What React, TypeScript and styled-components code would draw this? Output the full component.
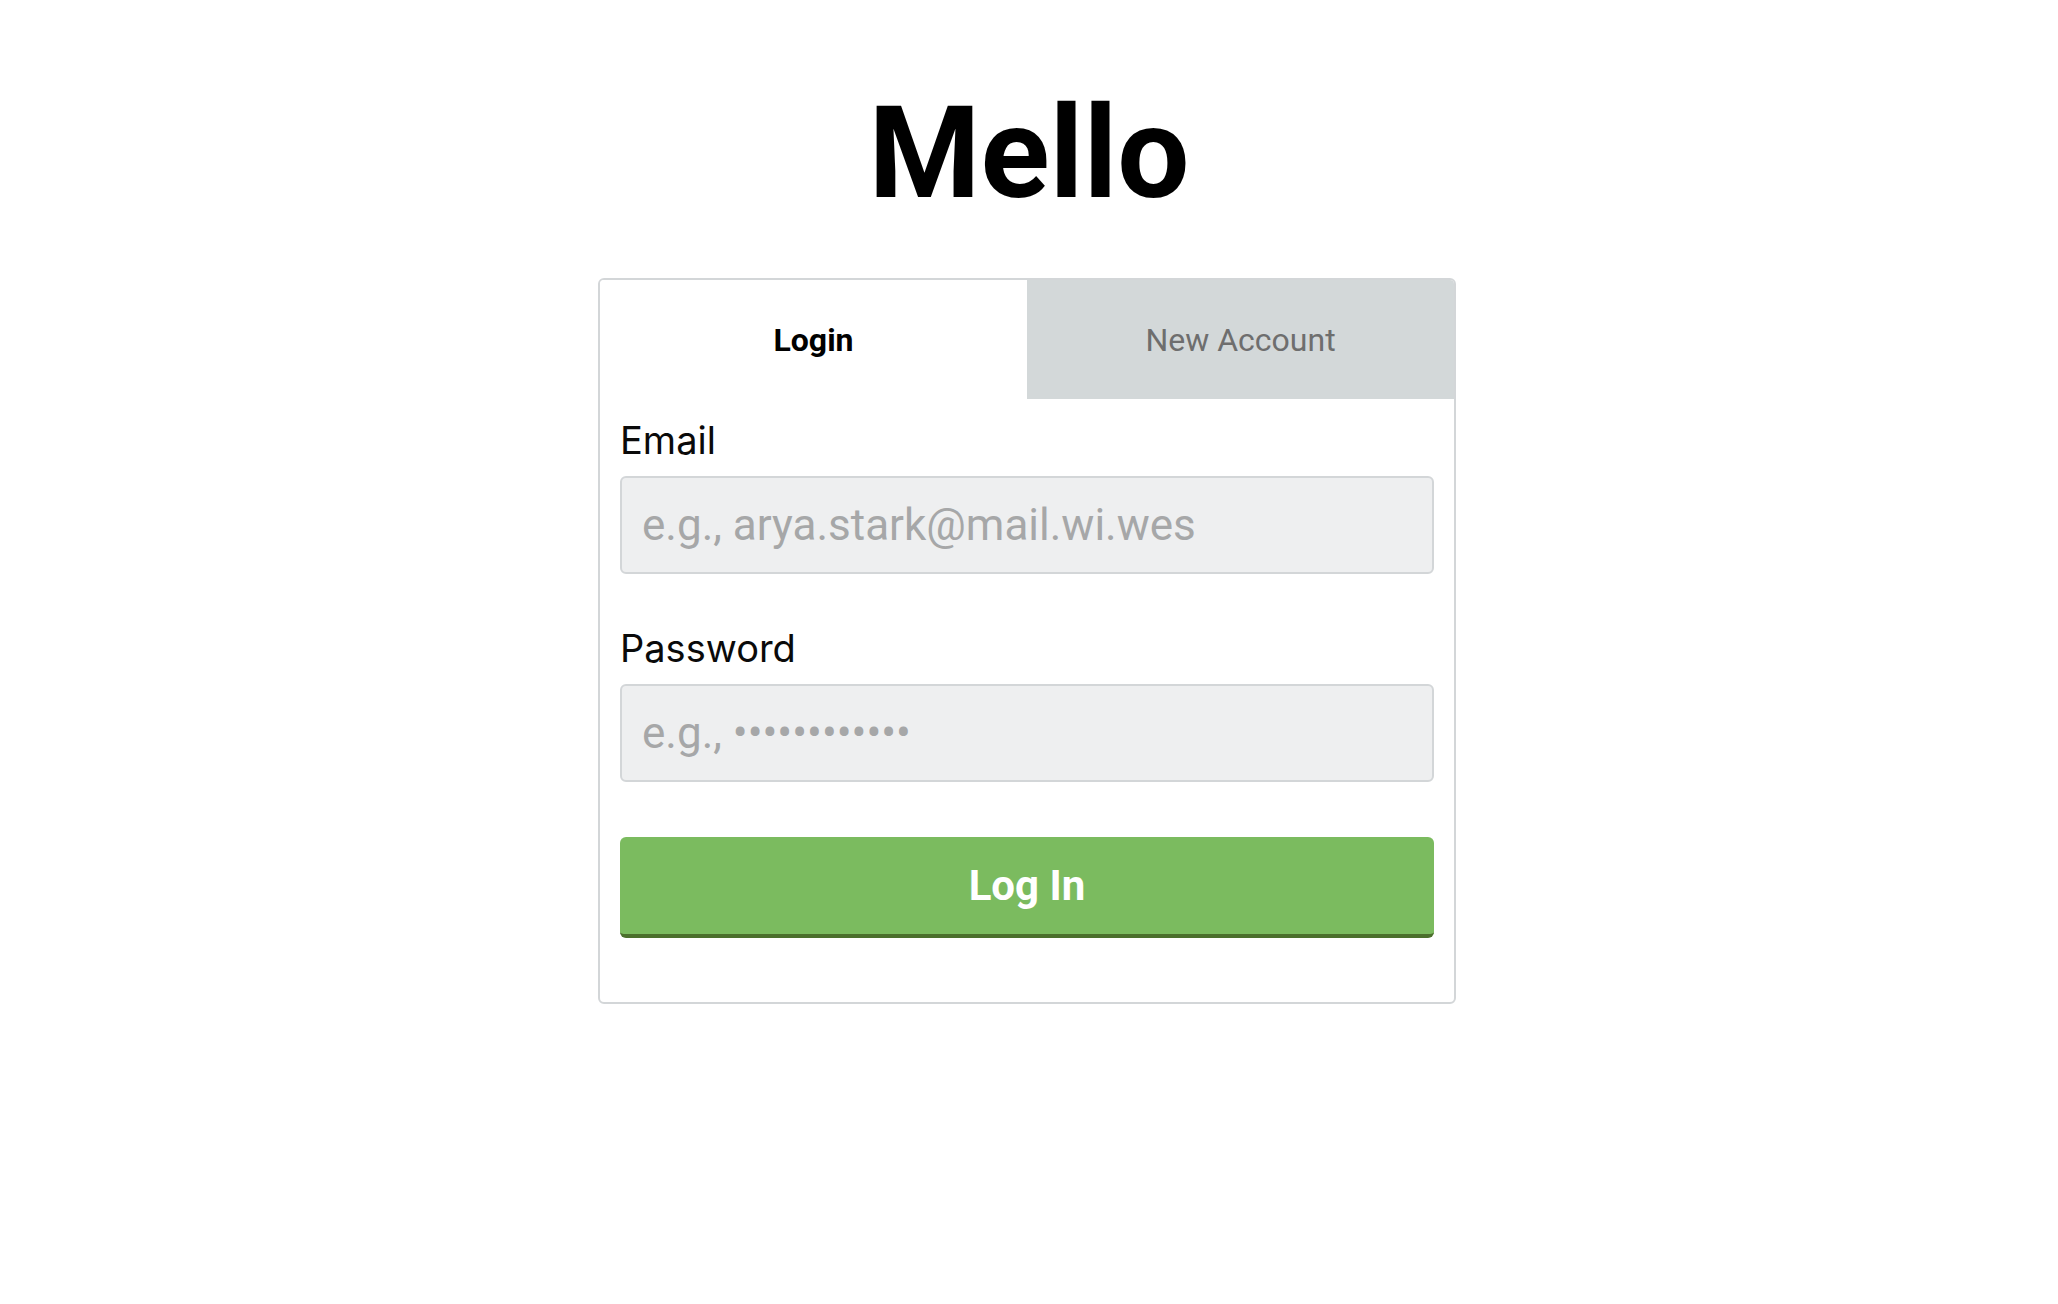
import React from "react";
import styled, { createGlobalStyle } from "styled-components";

const GlobalStyle = createGlobalStyle`
  html, body {
    margin: 0;
    padding: 0;
    background: #ffffff;
    font-family: Roboto, "Liberation Sans", Arial, sans-serif;
  }
  * { box-sizing: border-box; }
`;

const Page = styled.main`
  display: flex;
  flex-direction: column;
  align-items: center;
  padding-top: 89px;
`;

const Title = styled.h1`
  margin: 0 0 61px;
  font-size: 128px;
  line-height: 1;
  font-weight: 700;
  color: #000;
`;

const Card = styled.section`
  width: 858px;
  margin-right: 4px;
  border: 2px solid #d3d6d8;
  border-radius: 6px;
  overflow: hidden;
`;

const TabBar = styled.div`
  display: grid;
  grid-template-columns: 1fr 1fr;
  height: 119px;
`;

const Tab = styled.button<{ $active?: boolean }>`
  display: flex;
  align-items: center;
  justify-content: center;
  border: none;
  margin: 0;
  padding: 0;
  font-family: inherit;
  font-size: 32px;
  font-weight: ${(p) => (p.$active ? 700 : 400)};
  color: ${(p) => (p.$active ? "#000" : "#6e6e6e")};
  background: ${(p) => (p.$active ? "#ffffff" : "#d3d8d9")};
  cursor: pointer;
`;

const Form = styled.form`
  display: flex;
  flex-direction: column;
  padding: 20px 20px 64px;
`;

const Field = styled.div`
  display: flex;
  flex-direction: column;
  gap: 15px;
  margin-bottom: 53px;
`;

const Label = styled.label`
  font-family: Inter, Roboto, "Liberation Sans", sans-serif;
  font-size: 38px;
  line-height: 42px;
  color: #0a0a0a;
`;

const Input = styled.input`
  height: 98px;
  width: 100%;
  padding: 0 20px;
  border: 2px solid #d3d6d8;
  border-radius: 6px;
  background: #eeeff0;
  font-family: inherit;
  font-size: 44px;
  color: #333;
  outline: none;
  &::placeholder {
    color: #a6a7a8;
  }
`;

const SubmitButton = styled.button`
  height: 101px;
  margin-top: 2px;
  border: none;
  border-bottom: 4px solid #4b6f2c;
  border-radius: 6px;
  background: #7bbb5f;
  color: #fff;
  font-family: inherit;
  font-size: 42px;
  font-weight: 700;
  cursor: pointer;
`;

export default function App() {
  return (
    <>
      <GlobalStyle />
      <Page>
        <Title>Mello</Title>
        <Card>
          <TabBar>
            <Tab $active type="button">Login</Tab>
            <Tab type="button">New Account</Tab>
          </TabBar>
          <Form onSubmit={(e) => e.preventDefault()}>
            <Field>
              <Label htmlFor="email">Email</Label>
              <Input id="email" type="email" placeholder="e.g., arya.stark@mail.wi.wes" />
            </Field>
            <Field>
              <Label htmlFor="password">Password</Label>
              <Input id="password" type="password" placeholder="e.g., ••••••••••••" />
            </Field>
            <SubmitButton type="submit">Log In</SubmitButton>
          </Form>
        </Card>
      </Page>
    </>
  );
}
